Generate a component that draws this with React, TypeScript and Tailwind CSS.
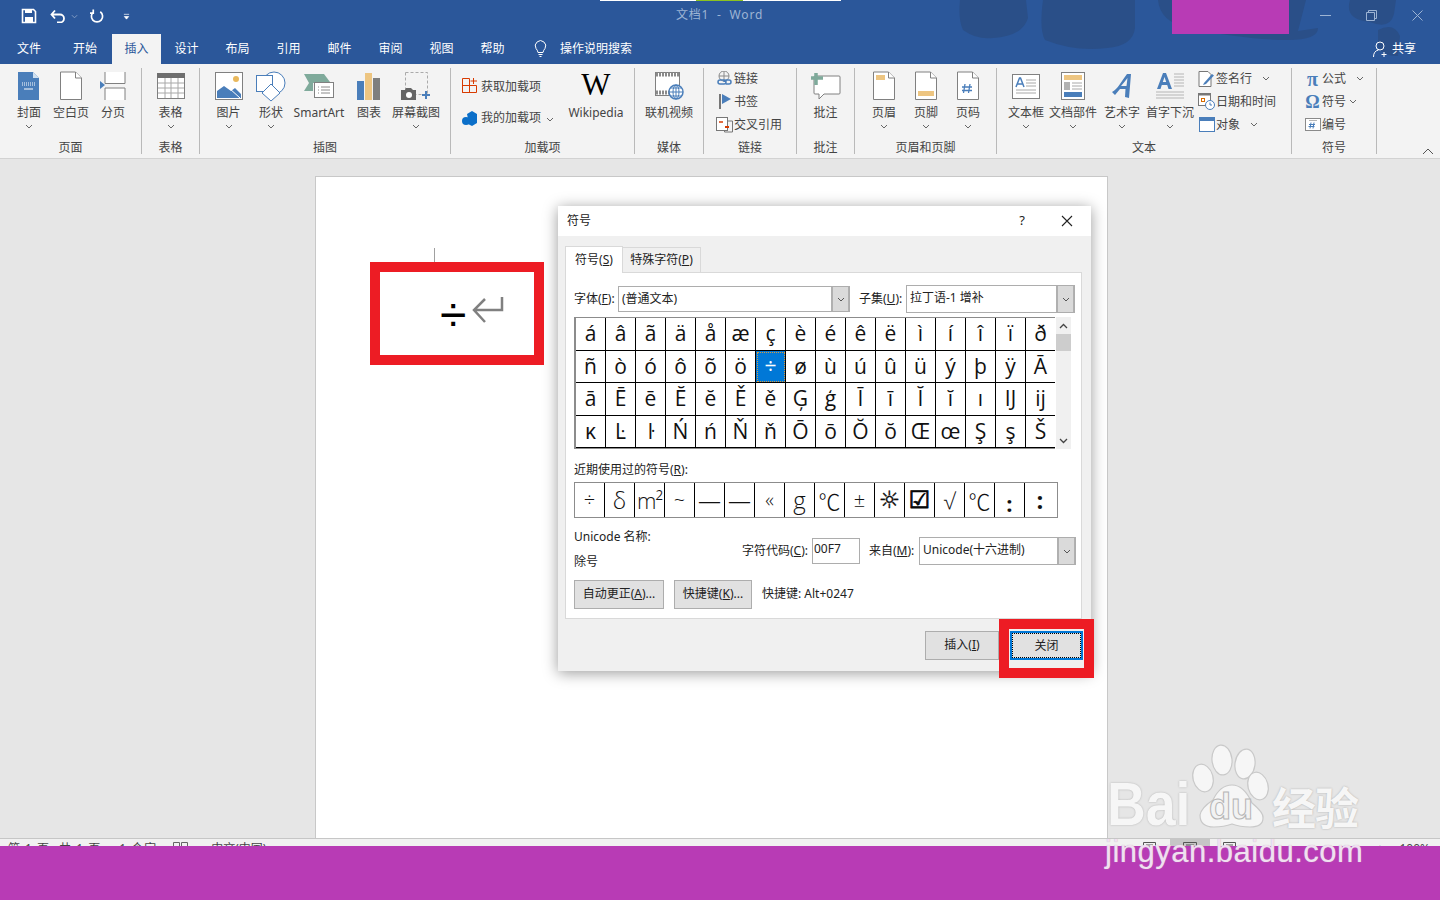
import React from "react";

const UI = "font-['Noto_Sans','Noto_Sans_CJK_SC',sans-serif]";
const B = "#4a7eba";
const G = "#808080";

const Chev = ({ c = "#666", w = 8 }: { c?: string; w?: number }) => (
  <svg width={w} height="5" viewBox="0 0 8 5" className="shrink-0"><path d="M1 1l3 3 3-3" fill="none" stroke={c} strokeWidth="1" /></svg>
);

const Doc = ({ children }: { children?: React.ReactNode }) => (
  <svg width="24" height="30" viewBox="0 0 24 30">
    <path d="M1.5 1h15l6 6v21.5h-21z" fill="#fff" stroke={G} />
    <path d="M16.5 1v6h6" fill="#fff" stroke={G} />
    {children}
  </svg>
);

const icons: Record<string, React.ReactNode> = {
  cover: (
    <svg width="22" height="30" viewBox="0 0 22 30">
      <path d="M0 1h15l6 6v22H0z" fill={B} />
      <path d="M15 1v6h6z" fill="#cfe0f0" />
      <path d="M4 12h13M4 14h13" stroke="#fff" strokeDasharray="1 1" />
      <path d="M6 18h9" stroke="#fff" />
    </svg>
  ),
  blank: <Doc />,
  brk: (
    <svg width="26" height="30" viewBox="0 0 26 30">
      <path d="M5 1v11.5h20V1M5 29V17h20v12" fill="#fff" stroke={G} />
      <path d="M0 10l5 4-5 4z" fill={B} />
    </svg>
  ),
  table: (
    <svg width="28" height="26" viewBox="0 0 28 26">
      <rect x=".5" y=".5" width="27" height="25" fill="#fff" stroke={G} />
      <rect width="28" height="5" fill="#6e6e6e" />
      <path d="M1 10h26M1 15h26M1 20h26M8 5v20M14 5v20M21 5v20" stroke="#a8a8a8" />
    </svg>
  ),
  pic: (
    <svg width="28" height="28" viewBox="0 0 28 28">
      <rect x=".5" y=".5" width="27" height="27" fill="#fff" stroke={G} />
      <circle cx="21" cy="7" r="3" fill="#e9b85c" />
      <path d="M2 26v-7l7-5 7 5 4-3 6 6v4z" fill={B} />
      <path d="M14 16l11 10" stroke="#fff" />
    </svg>
  ),
  shape: (
    <svg width="30" height="31" viewBox="0 0 30 31">
      <circle cx="18" cy="12" r="11" fill="#fff" stroke={B} />
      <rect x=".5" y="4.5" width="16" height="16" fill="#fff" stroke={B} />
      <path d="M15 13l9 9-9 8-9-8z" fill="#fff" stroke={B} />
    </svg>
  ),
  smart: (
    <svg width="30" height="26" viewBox="0 0 30 26">
      <path d="M0 1h20l6 8-2 1H9v8H0l5-8z" fill="#7faa9b" />
      <rect x="10.5" y="9.5" width="19" height="15" fill="#fff" stroke={G} />
      <path d="M14 14h1M17 14h9M14 17h1M17 17h9M14 20h1M17 20h9" stroke="#8a8a8a" />
    </svg>
  ),
  chart: (
    <svg width="24" height="27" viewBox="0 0 24 27">
      <rect y="8" width="7" height="19" fill={B} />
      <rect x="8" width="7" height="27" fill="#edc581" />
      <rect x="16" y="5" width="7" height="22" fill="#7f7f7f" />
    </svg>
  ),
  shot: (
    <svg width="30" height="28" viewBox="0 0 30 28">
      <rect x="4.5" y=".5" width="22" height="22" fill="none" stroke="#aaa" strokeDasharray="3 2" />
      <path d="M0 18h4l1-2h5l2 2h3v10H0z" fill="#666" />
      <circle cx="8" cy="23" r="3" fill="#fff" />
      <path d="M25 19v8M21 23h8" stroke={B} strokeWidth="2" />
    </svg>
  ),
  video: (
    <svg width="29" height="28" viewBox="0 0 29 28">
      <rect x=".5" y=".5" width="24" height="23" fill="#fff" stroke={G} />
      <path d="M1 2.500h23M1 20.500h23" stroke="#8a8a8a" strokeWidth="4" strokeDasharray="2 1" />
      <circle cx="21" cy="20" r="7" fill="#fff" stroke={B} strokeWidth="1.500" />
      <path d="M14 20h14M21 13v14M16 16h10M16 24h10" stroke={B} />
      <ellipse cx="21" cy="20" rx="3" ry="7" fill="none" stroke={B} />
    </svg>
  ),
  comment: (
    <svg width="30" height="29" viewBox="0 0 30 29">
      <path d="M4 4h24q1 0 1 1v16q0 1-1 1H13l-5 5v-5H4q-1 0-1-1V5q0-1 1-1z" fill="#fff" stroke={G} />
      <path d="M5 0v12M0 5h12" stroke="#7faa9b" strokeWidth="3.500" transform="translate(0 1)" />
    </svg>
  ),
  header: (
    <Doc><rect x="4" y="4" width="9" height="5" fill="#edc581" /></Doc>
  ),
  footer: (
    <Doc><rect x="4" y="20" width="16" height="5" fill="#edc581" /></Doc>
  ),
  page: (
    <svg width="24" height="30" viewBox="0 0 24 30">
      <path d="M1.500 1h15l6 6v21.500h-21z" fill="#fff" stroke={G} />
      <path d="M16.500 1v6h6" fill="#fff" stroke={G} />
      <path d="M9 13l-1.500 9M14 13l-1.500 9M6 16h10M6 19.500h10" stroke={B} strokeWidth="1.300" fill="none" />
    </svg>
  ),
  textbox: (
    <svg width="28" height="25" viewBox="0 0 28 25">
      <rect x=".5" y=".5" width="27" height="24" fill="#fff" stroke={G} />
      <path d="M4 13l3.500-9h1L12 13M5.500 10h5" stroke={B} strokeWidth="1.500" fill="none" />
      <path d="M14 6h10M14 9h10M14 12h10M4 16h20M4 19h20" stroke="#a8a8a8" />
    </svg>
  ),
  parts: (
    <svg width="24" height="28" viewBox="0 0 24 28">
      <rect x=".5" y=".5" width="23" height="27" fill="#fff" stroke={G} />
      <rect x="3" y="3" width="18" height="5" fill="#edc581" />
      <rect x="3" y="10" width="6" height="8" fill="#b2b2b2" />
      <path d="M11 11h10M11 14h10M11 17h10" stroke="#a8a8a8" />
      <rect x="3" y="20" width="18" height="5" fill={B} />
    </svg>
  ),
  art: (
    <svg width="22" height="26" viewBox="0 0 22 26">
      <path d="M1 19q4-2 8-8t7-10h4l-2 24-4-1 .5-8H9l-5 6z M10 13h5.500l1-8q-3 4-6.500 8z" fill={B} fillRule="evenodd" />
    </svg>
  ),
  drop: (
    <svg width="29" height="29" viewBox="0 0 29 29">
      <path d="M1 17L7 1h3l6 16h-3.500l-1.300-4H5.800l-1.300 4zM6.800 10h3.400L8.500 5z" fill={B} fillRule="evenodd" />
      <path d="M18 2h10M18 5h10M18 8h10M18 11h10M18 14h10M0 20h28M0 23h28M0 26h28" stroke="#b5b5b5" />
    </svg>
  ),
  wiki: <span className="font-['Liberation_Serif',serif] text-[31px] leading-[30px] text-black -mt-[3px]">W</span>,
};

const Large = ({ w, icon, label, chev = true, iconClass = "" }: { w: number; icon: React.ReactNode; label: string; chev?: boolean; iconClass?: string }) => (
  <div className="flex flex-col items-center pt-[1px] shrink-0" style={{ width: w }}>
    <div className={"h-[34px] flex items-center justify-center " + iconClass}>{icon}</div>
    <div className="h-[16px] leading-[16px] mt-[2px] whitespace-nowrap">{label}</div>
    {chev && <div className="h-[12px] flex items-center justify-center -mt-[1px]"><Chev /></div>}
  </div>
);

const Small = ({ icon, label, chev, gap = 0 }: { icon: React.ReactNode; label: string; chev?: number; gap?: number }) => (
  <div className="h-[23px] flex items-center whitespace-nowrap">
    <div className="w-[19px] h-[20px] flex items-center justify-center shrink-0">{icon}</div>
    <span style={{ marginLeft: gap }}>{label}</span>
    {chev !== undefined && <span className="flex" style={{ marginLeft: chev }}><Chev /></span>}
  </div>
);

const Group = ({ w, label, children, className = "" }: { w: number; label: string; children: React.ReactNode; className?: string }) => (
  <div className="h-[86px] mt-[4px] border-r border-[#b9b9b9] flex flex-col shrink-0" style={{ width: w }}>
    <div className={"h-[71px] flex " + className}>{children}</div>
    <div className="h-[15px] leading-[17px] text-center">{label}</div>
  </div>
);

const Ribbon = () => (
  <div className="h-[95px] bg-[#f3f3f3] border-b border-[#d2d2d2] flex text-[12px] text-[#444] relative">
    <Group w={142} label="页面" className="pl-[8px]">
      <Large w={42} icon={icons.cover} label="封面" />
      <Large w={42} icon={icons.blank} label="空白页" chev={false} />
      <Large w={42} icon={icons.brk} label="分页" chev={false} />
    </Group>
    <Group w={58} label="表格">
      <Large w={57} icon={icons.table} label="表格" />
    </Group>
    <Group w={251} label="插图" className="pl-[7px]">
      <Large w={43} icon={icons.pic} label="图片" />
      <Large w={42} icon={icons.shape} label="形状" />
      <Large w={54} icon={icons.smart} label="SmartArt" chev={false} />
      <Large w={46} icon={icons.chart} label="图表" chev={false} />
      <Large w={48} icon={icons.shot} label="屏幕截图" />
    </Group>
    <Group w={184} label="加载项" className="pl-[11px]">
      <div className="flex flex-col w-[102px] pt-[9px] shrink-0">
        <div className="h-[20px] flex items-center whitespace-nowrap">
          <svg width="16" height="15" viewBox="0 0 16 15" className="mr-[3px] -mt-[3px]"><path d="M.5.500h7v14h-7zM.5 7.500h14v7h-14zM7.500 7.500v7M11.500 0v6M8.500 3h6.500" fill="none" stroke="#d83b01" /></svg>
          获取加载项
        </div>
        <div className="h-[20px] flex items-center whitespace-nowrap mt-[11px]">
          <svg width="16" height="15" viewBox="0 0 16 15" className="mr-[3px]"><path d="M5 3l5-3 5 3v9l-5 3-4-2V8z" fill="#0b6fc9" /><circle cx="4" cy="10" r="4" fill="#0b6fc9" /></svg>
          我的加载项
          <span className="ml-[5px] flex mt-[2px]"><Chev /></span>
        </div>
      </div>
      <Large w={64} icon={icons.wiki} label="Wikipedia" chev={false} />
    </Group>
    <Group w={69} label="媒体">
      <Large w={68} icon={icons.video} label="联机视频" chev={false} />
    </Group>
    <Group w={93} label="链接" className="flex-col pl-[11px] [&>div:first-child]:-mt-[1px]">
      <Small label="链接" icon={
        <svg width="17" height="16" viewBox="0 0 17 16"><circle cx="8" cy="5" r="5" fill="none" stroke="#8a8a8a" /><path d="M3 5h10M8 0v10" stroke="#8a8a8a" /><path d="M2 11a2 2 0 0 1 2-2h4a2 2 0 0 1 0 4H4a2 2 0 0 1-2-2zM8 11a2 2 0 0 1 2-2h3a2 2 0 0 1 0 4h-3" fill="none" stroke={B} strokeWidth="1.500" /></svg>
      } />
      <Small label="书签" icon={
        <svg width="14" height="15" viewBox="0 0 14 15"><rect x="1" width="2" height="15" fill="#777" /><path d="M4 0l9 5-9 5z" fill={B} /></svg>
      } />
      <Small label="交叉引用" icon={
        <svg width="17" height="16" viewBox="0 0 17 16"><rect x=".5" y=".5" width="11" height="13" fill="#fff" stroke="#777" /><path d="M11.500 4h5v11h-8v-2" fill="none" stroke="#777" /><path d="M3 5h4" stroke="#d83b01" strokeWidth="1.500" /><path d="M9 10h4" stroke="#d83b01" strokeWidth="2" /></svg>
      } />
    </Group>
    <Group w={58} label="批注">
      <Large w={57} icon={icons.comment} label="批注" chev={false} />
    </Group>
    <Group w={142} label="页眉和页脚" className="pl-[8px]">
      <Large w={42} icon={icons.header} label="页眉" />
      <Large w={42} icon={icons.footer} label="页脚" />
      <Large w={42} icon={icons.page} label="页码" />
    </Group>
    <Group w={295} label="文本" className="pl-[7px]">
      <Large w={44} icon={icons.textbox} label="文本框" />
      <Large w={50} icon={icons.parts} label="文档部件" />
      <Large w={48} icon={icons.art} label="艺术字" />
      <Large w={48} icon={icons.drop} label="首字下沉" />
      <div className="flex flex-col ml-[3px] -mt-[1px]">
        <Small label="签名行" gap={0} chev={10} icon={
          <svg width="17" height="16" viewBox="0 0 17 16"><path d="M1 .5h9l3 3v12H1z" fill="#fff" stroke="#777" /><path d="M6 12l8-9 2 1.500L8 13l-3 1z" fill={B} /></svg>
        } />
        <Small label="日期和时间" gap={0} icon={
          <svg width="17" height="17" viewBox="0 0 17 17"><rect x=".5" y=".5" width="12" height="12" fill="#fff" stroke="#777" /><rect x="1" width="11" height="2.500" fill="#777" /><rect x="3.500" y="5.500" width="3" height="3" fill="none" stroke="#d86b01" /><circle cx="12" cy="12" r="4.500" fill="#fff" stroke={B} /><path d="M12 9.500V12h2" stroke={B} fill="none" /></svg>
        } />
        <Small label="对象" gap={0} chev={10} icon={
          <svg width="16" height="15" viewBox="0 0 16 15"><rect x=".5" y=".5" width="15" height="14" fill="#fff" stroke={B} /><rect width="16" height="4" fill={B} /></svg>
        } />
      </div>
    </Group>
    <Group w={85} label="符号" className="flex-col pl-[11px] [&>div:first-child]:-mt-[1px]">
      <Small label="公式" chev={10} icon={<span className="font-['Liberation_Serif',serif] text-[20px] leading-[20px] font-bold text-[#4a7eba]">π</span>} />
      <Small label="符号" chev={3} icon={<span className="font-['Liberation_Serif',serif] text-[18px] leading-[20px] font-bold text-[#4a7eba]">Ω</span>} />
      <Small label="编号" icon={
        <svg width="16" height="13" viewBox="0 0 16 13"><rect x=".5" y=".5" width="15" height="12" fill="#fff" stroke="#8a8a8a" /><path d="M6 4.500l-1 6M9 4.500l-1 6M4 6.500h6M3.500 8.500h6" stroke={B} fill="none" /><path d="M4 2.500h8" stroke="#b5b5b5" /></svg>
      } />
    </Group>
    <div className="flex-1 flex justify-end items-end pr-[6px] pb-[3px]">
      <svg width="12" height="7" viewBox="0 0 12 7"><path d="M1 6l5-5 5 5" fill="none" stroke="#555" /></svg>
    </div>
  </div>
);

const tabs: [string, number][] = [["文件", 58], ["开始", 54], ["插入", 49], ["设计", 51], ["布局", 51], ["引用", 51], ["邮件", 51], ["审阅", 51], ["视图", 51], ["帮助", 51]];

const TitleBar = () => (
  <div className="h-[64px] bg-[#2b579a] relative text-white">
    <svg className="absolute left-[950px] top-0" width="490" height="64" viewBox="0 0 490 64">
      <path d="M10 0q-2 20 3 30 14 10 30 8 30-2 35-20l-2-18zM93 0q-4 30 2 40 30 12 62 8 26-2 28-20V0zM208 0q2 22 30 28 60 12 100 12 30 0 30-12l-20 3 8-31zM400 0q-6 20 20 22 20 8 24-8l2-14zM428 30q16-8 22 6l-2 20q-16 0-20-10z" fill="#2a4f88" />
    </svg>
    <div className="absolute left-[600px] top-0 w-[241px] h-[1px] bg-white" />
    <div className="absolute left-[696px] top-0 w-[47px] h-[1px] bg-[#8cc21f]" />
    <div className="absolute left-[1172px] top-0 w-[117px] h-[34px] bg-[#b83bb5]" />
    <div className="h-[34px] flex items-center pl-[21px] pb-[2px] relative">
      <svg width="16" height="16" viewBox="0 0 16 16"><path d="M1.500 1.500h11l2 2v11h-13z" fill="none" stroke="#fff" strokeWidth="1.600" /><rect x="4" y="1" width="7" height="4" fill="#fff" /><rect x="4" y="9" width="8" height="6" fill="#fff" /></svg>
      <svg width="16" height="14" viewBox="0 0 16 14" className="ml-[13px]"><path d="M2 5.500h8a4 4 0 0 1 0 8H7M5 1.500l-3.500 4 3.500 4" fill="none" stroke="#fff" strokeWidth="1.800" /></svg>
      <span className="ml-[5px] flex"><Chev c="#8ea6c9" w={7} /></span>
      <svg width="14" height="14" viewBox="0 0 15 15" className="ml-[12px]"><path d="M4 2.500A6 6 0 1 0 11 2.500M3.500 0v4h-3.500" fill="none" stroke="#fff" strokeWidth="1.800" transform="translate(0 .5)" /></svg>
      <svg width="7" height="7" viewBox="0 0 8 7" className="ml-[19px]"><path d="M1 1h6M1.500 3.500l2.500 3 2.500-3z" stroke="#fff" fill="#fff" strokeWidth=".8" /></svg>
      <div className="ml-[546px] -mt-[3px] text-[12px] text-[#9db4d4] tracking-[0.8px] whitespace-pre">文档1  -  Word</div>
      <div className="ml-auto flex items-center pr-[17px] gap-[35px] -mt-[1px]">
        <svg width="11" height="11" viewBox="0 0 11 11"><path d="M0 5.500h11" stroke="#9db4d4" /></svg>
        <svg width="11" height="11" viewBox="0 0 11 11"><path d="M.5 2.500h8v8h-8zM2.500 2.500v-2h8v8h-2" fill="none" stroke="#9db4d4" /></svg>
        <svg width="11" height="11" viewBox="0 0 11 11"><path d="M.5.500l10 10M10.500.500l-10 10" stroke="#9db4d4" /></svg>
      </div>
    </div>
    <div className="h-[30px] flex items-stretch text-[12px] relative">
      {tabs.map(([t, w]) => (
        <div key={t} style={{ width: w }} className={"flex items-center justify-center pb-[1px] " + (t === "插入" ? "bg-[#f3f3f3] text-[#2b579a]" : "")}>{t}</div>
      ))}
      <div className="flex items-center ml-[16px] pb-[1px]">
        <svg width="13" height="17" viewBox="0 0 13 17"><path d="M4 12.500Q3.500 10 2 8.500a5.200 5.200 0 1 1 9 0q-1.500 1.500-2 4zM4.500 14.500h4M5.500 16.500h2" fill="none" stroke="#fff" /></svg>
        <span className="ml-[13px]">操作说明搜索</span>
      </div>
      <div className="ml-auto flex items-center pr-[24px] pb-[1px]">
        <svg width="16" height="16" viewBox="0 0 16 16"><circle cx="7" cy="5" r="4" fill="none" stroke="#fff" /><path d="M.5 16q0-6 5-7M11 11v5M8.500 13.500h5" fill="none" stroke="#fff" /></svg>
        <span className="ml-[3px]">共享</span>
      </div>
    </div>
  </div>
);

const chars = "áâãäåæçèéêëìíîïðñòóôõö÷øùúûüýþÿĀāĒēĔĕĚěĢģĪīĬĭıĲĳĸĿŀŃńŇňŌōŎŏŒœŞşŠ".split("");
const recent: [string, string][] = [
  ["÷", "text-[20px] font-light"],
  ["δ", "text-[23px] font-light"],
  ["m²", "text-[22px] font-light tracking-[-1px]"],
  ["~", "text-[20px] font-light"],
  ["—", "text-[23px] font-light"],
  ["—", "text-[23px] font-light"],
  ["«", "text-[20px] font-light"],
  ["g", "text-[24px] font-light"],
  ["℃", "text-[22px] font-light font-['Noto_Sans_CJK_SC',sans-serif]"],
  ["±", "text-[20px] font-light"],
  ["☼", "text-[24px] font-['DejaVu_Sans',sans-serif] [-webkit-text-stroke:0.4px_black]"],
  ["☑", "text-[24px] font-['DejaVu_Sans',sans-serif] [-webkit-text-stroke:0.8px_black]"],
  ["√", "text-[22px] font-light"],
  ["℃", "text-[22px] font-light font-['Noto_Sans_CJK_SC',sans-serif]"],
  [":", "text-[22px] font-bold pt-[5px]"],
  [":", "text-[24px] font-bold"],
];

const Select = ({ w, text, h = 26 }: { w: number; text: string; h?: number }) => (
  <div className="flex border border-[#adadad] bg-white shrink-0" style={{ width: w, height: h }}>
    <div className="flex-1 pl-[3px] leading-[23px] whitespace-nowrap overflow-hidden">{text}</div>
    <div className="w-[18px] bg-[#dadada] border-2 border-r-1 border-t-0 border-b-0 border-[#b0b0b0] flex items-center justify-center"><Chev c="#555" /></div>
  </div>
);

const U = ({ before, k, after = ")" }: { before: string; k: string; after?: string }) => (
  <span className="whitespace-nowrap">{before}<span className="underline">{k}</span>{after}</span>
);

const Btn = ({ w, children, className = "" }: { w: number; children: React.ReactNode; className?: string }) => (
  <div className={"h-[29px] bg-[#e1e1e1] border border-[#adadad] flex items-center justify-center pb-[1px] shrink-0 " + className} style={{ width: w }}>{children}</div>
);

const Dialog = () => (
  <div className="absolute left-[558px] top-[206px] w-[533px] h-[465px] bg-[#f0f0f0] shadow-[0_2px_14px_rgba(0,0,0,0.4)] text-[12px] text-[#222]">
    <div className="h-[30px] bg-white flex items-center pl-[9px] pr-[18px]">
      <span>符号</span>
      <span className="ml-auto mr-[36px] text-[13px] -mt-[1px]">?</span>
      <svg width="12" height="12" viewBox="0 0 12 12"><path d="M1 1l10 10M11 1L1 11" stroke="#222" strokeWidth="1.100" /></svg>
    </div>
    <div className="h-[36px] flex items-end pl-[7px]">
      <div className="w-[58px] h-[27px] bg-white border border-b-0 border-[#d9d9d9] flex items-center justify-center relative top-[1px]"><U before="符号(" k="S" /></div>
      <div className="w-[78px] h-[25px] bg-[#f0f0f0] border border-l-0 border-b-0 border-[#d9d9d9] flex items-center justify-center"><U before="特殊字符(" k="P" /></div>
    </div>
    <div className="ml-[7px] w-[517px] h-[347px] bg-white border border-[#d9d9d9] pl-[8px]">
      <div className="flex items-center mt-[13px] h-[26px]">
        <span className="w-[44px] whitespace-nowrap"><U before="字体(" k="F" after="):" /></span>
        <Select w={232} text="(普通文本)" />
        <span className="ml-[9px] w-[47px] whitespace-nowrap"><U before="子集(" k="U" after="):" /></span>
        <Select w={169} h={28} text="拉丁语-1 增补" />
      </div>
      <div className="flex mt-[5px] h-[132px]">
        <div className="w-[481px] h-[132px] border-t border-b border-[#8c8c8c] border-l-2 grid grid-cols-[repeat(16,30px)] auto-rows-[32.5px] overflow-hidden text-[21px] text-[#111] font-['Open_Sans','Noto_Sans',sans-serif]">
          {chars.map((c, i) => (
            <div key={i} className={"flex items-center justify-center border-r border-b border-black leading-none " + (c === "÷" ? "bg-[#0078d7] text-white outline-1 -outline-offset-2 outline-dotted outline-[#d99a3c]" : "")}>{c}</div>
          ))}
        </div>
        <div className="w-[15px] h-[132px] bg-[#f0f0f0] flex flex-col items-center ml-[1px]">
          <div className="h-[17px] flex items-center"><svg width="9" height="6" viewBox="0 0 9 6"><path d="M1 5l3.500-3.500L8 5" fill="none" stroke="#444" strokeWidth="1.300" /></svg></div>
          <div className="w-full h-[17px] bg-[#cdcdcd]" />
          <div className="flex-1" />
          <div className="h-[17px] flex items-center"><svg width="9" height="6" viewBox="0 0 9 6"><path d="M1 1l3.500 3.500L8 1" fill="none" stroke="#444" strokeWidth="1.300" /></svg></div>
        </div>
      </div>
      <div className="mt-[12px] h-[16px] leading-[18px]"><U before="近期使用过的符号(" k="R" after="):" /></div>
      <div className="mt-[5px] w-[484px] h-[36px] border border-[#8c8c8c] flex text-[#111] font-['Open_Sans','Noto_Sans',sans-serif]">
        {recent.map(([c, cls], i) => (
          <div key={i} className={"w-[30px] shrink-0 flex items-center justify-center border-r border-black last:border-r-0 leading-none " + cls}>{c}</div>
        ))}
      </div>
      <div className="flex mt-[10px] h-[45px]">
        <div className="w-[166px]">
          <div className="h-[18px] leading-[18px] whitespace-nowrap">Unicode 名称:</div>
          <div className="h-[18px] leading-[18px] mt-[7px]">除号</div>
        </div>
        <div className="flex items-start pt-[10px]">
          <span className="h-[25px] leading-[25px] w-[71px] pr-[3px] text-right whitespace-nowrap"><U before="字符代码(" k="C" after="):" /></span>
          <div className="ml-[1px] w-[48px] h-[26px] border border-[#adadad] pl-[1px] leading-[20px]">00F7</div>
          <span className="h-[25px] leading-[25px] ml-[9px] w-[47px]"><U before="来自(" k="M" after="):" /></span>
          <div className="ml-[3px] -mt-[1px]"><Select w={157} h={28} text="Unicode(十六进制)" /></div>
        </div>
      </div>
      <div className="flex items-center mt-[7px]">
        <Btn w={90}><U before="自动更正(" k="A" after=")..." /></Btn>
        <Btn w={78} className="ml-[10px]"><U before="快捷键(" k="K" after=")..." /></Btn>
        <span className="ml-[10px] whitespace-nowrap pb-[1px]">快捷键: Alt+0247</span>
      </div>
    </div>
    <div className="flex justify-end pr-[8px] mt-[12px]">
      <Btn w={74}><U before="插入(" k="I" /></Btn>
      <div className="ml-[11px] w-[73px] h-[29px] bg-[#e1e1e1] border-2 border-[#0078d7] flex items-center justify-center outline-1 -outline-offset-3 outline-dotted outline-black">关闭</div>
    </div>
  </div>
);

const Watermark = () => (
  <div className="absolute left-[1100px] top-[740px] w-[270px] h-[135px] pointer-events-none font-['Liberation_Sans',sans-serif]">
    <svg className="absolute left-0 top-0" width="270" height="135" viewBox="0 0 270 135">
      <g fill="#f6f6f6" stroke="#c9c9c9" strokeWidth="1.200">
        <ellipse cx="122" cy="20" rx="10" ry="15" transform="rotate(-6 122 20)" />
        <ellipse cx="145" cy="24" rx="10" ry="15" transform="rotate(8 145 24)" />
        <ellipse cx="103" cy="38" rx="10" ry="14" transform="rotate(-15 103 38)" />
        <ellipse cx="158" cy="46" rx="10" ry="14" transform="rotate(-15 158 46)" />
        <path d="M132 45q12 0 20 18 12 10 11 15 0 9-13 9-10 0-18-3-8 3-18 3-14 0-14-12 1-7 13-15 7-15 19-15z" />
      </g>
    </svg>
    <div className="absolute left-[7px] top-[34px] text-[61px] leading-[60px] font-bold text-[#f6f6f6] origin-left scale-x-[0.88] [text-shadow:0_0_2px_#a8a8a8]">Bai</div>
    <div className="absolute left-[109px] top-[49px] text-[36px] leading-[36px] font-bold text-[#f2f2f2] [-webkit-text-stroke:1px_#b5b5b5]">du</div>
    <div className="absolute left-[172px] top-[42px] text-[44px] leading-[48px] font-bold tracking-[-1px] text-[#f6f6f6] [text-shadow:0_0_2px_#a8a8a8] font-['Noto_Sans_CJK_SC',sans-serif]">经验</div>
    <div className="absolute left-[5px] top-[94px] text-[31px] leading-[36px] tracking-[0.5px] text-[#f1dff1] whitespace-nowrap [text-shadow:0_0_1px_#bbb]">jingyan.baidu.com</div>
  </div>
);

const StatusBar = () => (
  <div className="h-[8px] bg-[#f1f1f1] border-t border-[#c6c6c6] overflow-hidden flex text-[12px] leading-[16px] text-[#444] whitespace-nowrap relative">
    <span className="ml-[8px] mt-[2px] tracking-[1px]">第 1 页，</span>
    <span className="ml-[-4px] mt-[2px] tracking-[1px]">共 1 页</span>
    <span className="ml-[18px] mt-[2px] tracking-[1px]">1 个字</span>
    <svg width="16" height="14" viewBox="0 0 16 14" className="ml-[16px] mt-[3px] shrink-0"><path d="M.5.500h6v12h-6zM8.500.500h6v12h-6z" fill="none" stroke="#666" /></svg>
    <span className="ml-[22px] mt-[2px]">中文(中国)</span>
    <div className="ml-auto flex">
      <svg width="13" height="12" viewBox="0 0 13 12" className="mt-[3px] shrink-0"><path d="M.5.500h12v11H.5zM3 3h7" fill="none" stroke="#555" /></svg>
      <div className="ml-[14px] w-[40px] h-[8px] bg-[#c6c6c6] flex justify-center pt-[3px]">
        <svg width="14" height="12" viewBox="0 0 14 12" className="shrink-0"><path d="M.5.500h13v11H.5zM3 3h8" fill="none" stroke="#555" /></svg>
      </div>
      <svg width="13" height="12" viewBox="0 0 13 12" className="ml-[13px] mt-[3px] shrink-0"><path d="M.5.500h12v11H.5zM3 3h7" fill="none" stroke="#555" /></svg>
      <span className="ml-[80px] mt-[2px] block w-[8px] text-center">-</span>
      <span className="ml-[52px] mt-[2px] block w-[8px]">+</span>
      <span className="ml-[15px] mt-[2px] mr-[10px]">100%</span>
    </div>
  </div>
);

export default function App() {
  return (
    <div className={"relative w-[1440px] h-[900px] overflow-hidden flex flex-col " + UI}>
      <TitleBar />
      <Ribbon />
      <div className="h-[679px] bg-[#e6e6e6] pl-[315px] pt-[17px]">
        <div className="w-[793px] h-[662px] bg-white border-l border-r border-t border-[#c8c8c8]" />
      </div>
      <StatusBar />
      <div className="flex-1 bg-[#b83bb5]" />

      <div className="absolute left-[434px] top-[248px] w-[1px] h-[14px] bg-[#a0a0a0]" />
      <div className="absolute left-[370px] top-[262px] w-[174px] h-[103px] border-[10px] border-[#ed1c24] flex items-center pl-[60px]">
        <span className="font-['Liberation_Sans',sans-serif] text-[48px] leading-none text-black mt-[2px]">÷</span>
        <svg width="32" height="29" viewBox="0 0 32 29" className="ml-[6px] -mt-[7px]"><path d="M30 1v13H3M13 3L2 14l11 12" fill="none" stroke="#808080" strokeWidth="2.500" /></svg>
      </div>
      <Dialog />
      <div className="absolute left-[999px] top-[619px] w-[95px] h-[59px] border-[10px] border-[#ed1c24]" />
      <Watermark />
    </div>
  );
}
